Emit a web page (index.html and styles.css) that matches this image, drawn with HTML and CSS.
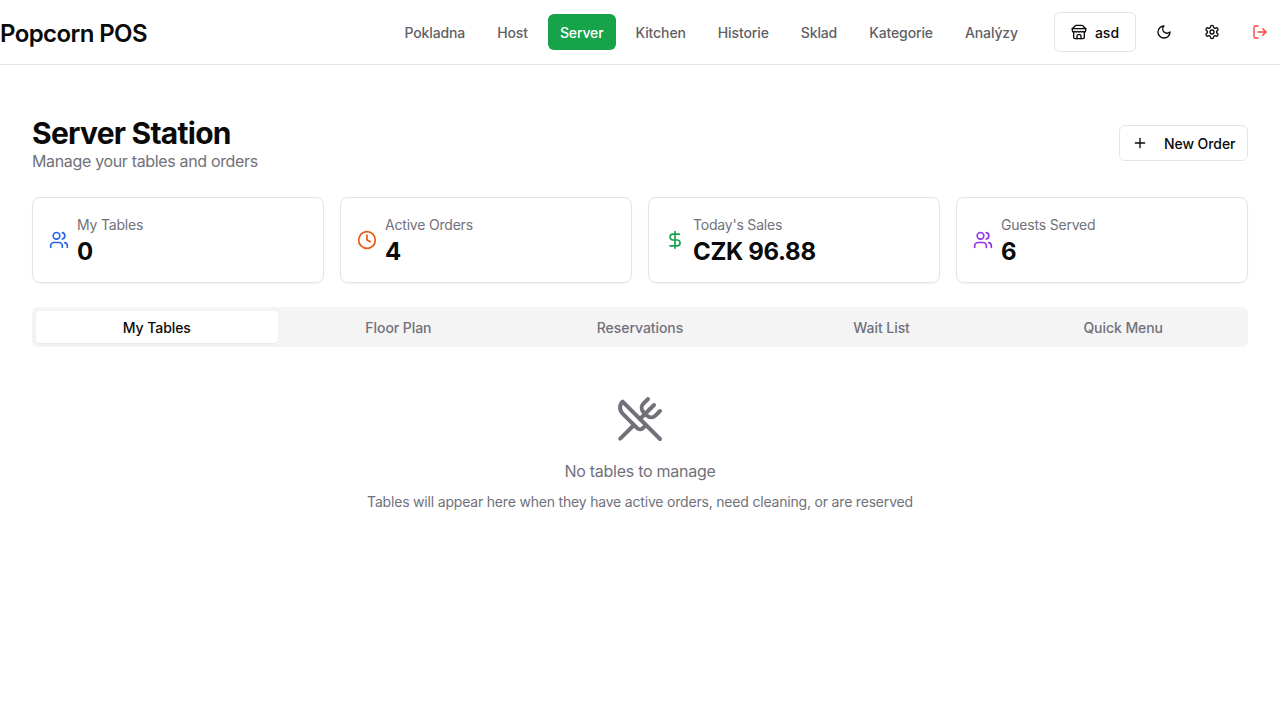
FILE: index.html
```html
<!DOCTYPE html>
<html lang="en">
<head>
    <meta charset="UTF-8">
    <meta name="viewport" content="width=device-width, initial-scale=1.0">
    <title>Popcorn POS - Server Station</title>
    <link rel="stylesheet" href="styles.css">
</head>
<body>

    <!-- Header -->
    <header class="topbar">
        <div class="logo">Popcorn POS</div>
        <div class="topbar-right">
            <nav class="main-nav">
                <a href="#">Pokladna</a>
                <a href="#">Host</a>
                <a href="#" class="active">Server</a>
                <a href="#">Kitchen</a>
                <a href="#">Historie</a>
                <a href="#">Sklad</a>
                <a href="#">Kategorie</a>
                <a href="#">Analýzy</a>
            </nav>
            <div class="topbar-actions">
                <button class="store-btn">
                    <svg class="icon icon-16" viewBox="0 0 24 24"><path d="m2 7 4.41-4.41A2 2 0 0 1 7.83 2h8.34a2 2 0 0 1 1.42.59L22 7"/><path d="M4 12v8a2 2 0 0 0 2 2h12a2 2 0 0 0 2-2v-8"/><path d="M15 22v-4a2 2 0 0 0-2-2h-2a2 2 0 0 0-2 2v4"/><path d="M2 7h20"/><path d="M22 7v3a2 2 0 0 1-2 2a2.7 2.7 0 0 1-1.59-.63.7.7 0 0 0-.82 0A2.7 2.7 0 0 1 16 12a2.7 2.7 0 0 1-1.59-.63.7.7 0 0 0-.82 0A2.7 2.7 0 0 1 12 12a2.7 2.7 0 0 1-1.59-.63.7.7 0 0 0-.82 0A2.7 2.7 0 0 1 8 12a2.7 2.7 0 0 1-1.59-.63.7.7 0 0 0-.82 0A2.7 2.7 0 0 1 4 12a2 2 0 0 1-2-2V7"/></svg>
                    asd
                </button>
                <button class="icon-btn">
                    <svg class="icon icon-16" viewBox="0 0 24 24"><path d="M12 3a6 6 0 0 0 9 9 9 9 0 1 1-9-9Z"/></svg>
                </button>
                <button class="icon-btn">
                    <svg class="icon icon-16" viewBox="0 0 24 24"><path d="M12.22 2h-.44a2 2 0 0 0-2 2v.18a2 2 0 0 1-1 1.73l-.43.25a2 2 0 0 1-2 0l-.15-.08a2 2 0 0 0-2.73.73l-.22.38a2 2 0 0 0 .73 2.73l.15.1a2 2 0 0 1 1 1.72v.51a2 2 0 0 1-1 1.74l-.15.09a2 2 0 0 0-.73 2.73l.22.38a2 2 0 0 0 2.73.73l.15-.08a2 2 0 0 1 2 0l.43.25a2 2 0 0 1 1 1.73V20a2 2 0 0 0 2 2h.44a2 2 0 0 0 2-2v-.18a2 2 0 0 1 1-1.73l.43-.25a2 2 0 0 1 2 0l.15.08a2 2 0 0 0 2.73-.73l.22-.39a2 2 0 0 0-.73-2.73l-.15-.08a2 2 0 0 1-1-1.74v-.5a2 2 0 0 1 1-1.74l.15-.09a2 2 0 0 0 .73-2.73l-.22-.38a2 2 0 0 0-2.73-.73l-.15.08a2 2 0 0 1-2 0l-.43-.25a2 2 0 0 1-1-1.73V4a2 2 0 0 0-2-2z"/><circle cx="12" cy="12" r="3"/></svg>
                </button>
                <button class="icon-btn logout">
                    <svg class="icon icon-16" viewBox="0 0 24 24"><path d="M9 21H5a2 2 0 0 1-2-2V5a2 2 0 0 1 2-2h4"/><polyline points="16 17 21 12 16 7"/><line x1="21" y1="12" x2="9" y2="12"/></svg>
                </button>
            </div>
        </div>
    </header>

    <!-- Main Content -->
    <main class="container">
        <div class="page-head">
            <div>
                <h1>Server Station</h1>
                <p>Manage your tables and orders</p>
            </div>
            <button class="new-order">
                <svg class="icon icon-16" viewBox="0 0 24 24"><path d="M5 12h14"/><path d="M12 5v14"/></svg>
                New Order
            </button>
        </div>

        <!-- Stat cards -->
        <div class="stats">
            <div class="stat-card">
                <svg class="icon icon-20 blue" viewBox="0 0 24 24"><path d="M16 21v-2a4 4 0 0 0-4-4H6a4 4 0 0 0-4 4v2"/><circle cx="9" cy="7" r="4"/><path d="M22 21v-2a4 4 0 0 0-3-3.87"/><path d="M16 3.13a4 4 0 0 1 0 7.75"/></svg>
                <div class="stat-text">
                    <div class="stat-label">My Tables</div>
                    <div class="stat-value">0</div>
                </div>
            </div>
            <div class="stat-card">
                <svg class="icon icon-20 orange" viewBox="0 0 24 24"><circle cx="12" cy="12" r="10"/><polyline points="12 6 12 12 16 14"/></svg>
                <div class="stat-text">
                    <div class="stat-label">Active Orders</div>
                    <div class="stat-value">4</div>
                </div>
            </div>
            <div class="stat-card">
                <svg class="icon icon-20 green" viewBox="0 0 24 24"><line x1="12" y1="2" x2="12" y2="22"/><path d="M17 5H9.5a3.5 3.5 0 0 0 0 7h5a3.5 3.5 0 0 1 0 7H6"/></svg>
                <div class="stat-text">
                    <div class="stat-label">Today's Sales</div>
                    <div class="stat-value">CZK 96.88</div>
                </div>
            </div>
            <div class="stat-card">
                <svg class="icon icon-20 purple" viewBox="0 0 24 24"><path d="M16 21v-2a4 4 0 0 0-4-4H6a4 4 0 0 0-4 4v2"/><circle cx="9" cy="7" r="4"/><path d="M22 21v-2a4 4 0 0 0-3-3.87"/><path d="M16 3.13a4 4 0 0 1 0 7.75"/></svg>
                <div class="stat-text">
                    <div class="stat-label">Guests Served</div>
                    <div class="stat-value">6</div>
                </div>
            </div>
        </div>

        <!-- Tabs -->
        <div class="tabs">
            <button class="tab active">My Tables</button>
            <button class="tab">Floor Plan</button>
            <button class="tab">Reservations</button>
            <button class="tab">Wait List</button>
            <button class="tab">Quick Menu</button>
        </div>

        <!-- Empty state -->
        <div class="empty">
            <svg class="icon icon-48" viewBox="0 0 24 24"><path d="m16 2-2.3 2.3a3 3 0 0 0 0 4.2l1.8 1.8a3 3 0 0 0 4.2 0L22 8"/><path d="M15 15 3.3 3.3a4.2 4.2 0 0 0 0 6l7.3 7.3c.7.7 2 .7 2.8 0L15 15Zm0 0 7 7"/><path d="m2.1 21.8 6.4-6.3"/><path d="m19 5-7 7"/></svg>
            <div class="empty-title">No tables to manage</div>
            <div class="empty-text">Tables will appear here when they have active orders, need cleaning, or are reserved</div>
        </div>
    </main>

</body>
</html>
```

FILE: styles.css
```css
/* General */
* {
    box-sizing: border-box;
}

body {
    font-family: 'Inter', sans-serif;
    margin: 0;
    padding: 0;
    background-color: #fff;
    color: #0a0a0a;
}

button {
    font-family: inherit;
    color: inherit;
    background: none;
    border: none;
    padding: 0;
}

.icon {
    fill: none;
    stroke: currentColor;
    stroke-width: 2;
    stroke-linecap: round;
    stroke-linejoin: round;
    flex-shrink: 0;
    display: block;
}

.icon-16 {
    width: 16px;
    height: 16px;
}

.icon-20 {
    width: 20px;
    height: 20px;
}

.icon-48 {
    width: 48px;
    height: 48px;
}

/* Header */
.topbar {
    height: 65px;
    border-bottom: 1px solid #e4e4e7;
    display: flex;
    align-items: center;
    justify-content: space-between;
}

.logo {
    padding-top: 3px;
    font-size: 24px;
    font-weight: 600;
    line-height: 32px;
    letter-spacing: -0.6px;
}

.topbar-right {
    display: flex;
    align-items: center;
    gap: 24px;
}

.main-nav {
    display: flex;
    gap: 8px;
}

.main-nav a {
    height: 36px;
    padding: 0 12px;
    display: flex;
    align-items: center;
    border-radius: 6px;
    color: #5f5f66;
    font-size: 14px;
    font-weight: 450;
    letter-spacing: -0.12px;
    text-decoration: none;
}

.main-nav a.active {
    background-color: #16a34a;
    color: #fff;
}

.topbar-actions {
    display: flex;
    align-items: center;
    gap: 8px;
}

.store-btn {
    width: 82px;
    height: 40px;
    border: 1px solid #e4e4e7;
    border-radius: 6px;
    display: flex;
    align-items: center;
    justify-content: center;
    gap: 8px;
    font-size: 14px;
    font-weight: 450;
}

.icon-btn {
    width: 40px;
    height: 40px;
    display: flex;
    align-items: center;
    justify-content: center;
    border-radius: 6px;
}

.logout {
    color: #ef4444;
}

/* Page */
.container {
    padding: 48px 32px 32px;
}

.page-head {
    display: flex;
    align-items: center;
    justify-content: space-between;
    margin-bottom: 24px;
}

.page-head h1 {
    margin: 2px 0 -2px;
    font-size: 30px;
    font-weight: 700;
    line-height: 36px;
    letter-spacing: -0.75px;
}

.page-head p {
    margin: 0;
    font-size: 16px;
    line-height: 24px;
    letter-spacing: -0.34px;
    color: #71717a;
}

.new-order {
    width: 129px;
    height: 36px;
    padding: 0 12px;
    border: 1px solid #e4e4e7;
    border-radius: 6px;
    display: flex;
    align-items: center;
    gap: 16px;
    font-size: 14px;
    font-weight: 450;
    letter-spacing: -0.08px;
    white-space: nowrap;
}

/* Stat cards */
.stats {
    display: grid;
    grid-template-columns: repeat(4, 1fr);
    gap: 16px;
    margin-bottom: 24px;
}

.stat-card {
    height: 86px;
    padding: 0 16px;
    border: 1px solid #e4e4e7;
    border-radius: 8px;
    box-shadow: 0 1px 2px rgba(0, 0, 0, 0.05);
    display: flex;
    align-items: center;
    gap: 8px;
}

.stat-text {
    padding-top: 3px;
}

.stat-label {
    font-size: 14px;
    line-height: 20px;
    letter-spacing: -0.2px;
    color: #71717a;
}

.stat-value {
    margin-top: 1px;
    font-size: 24px;
    font-weight: 700;
    line-height: 32px;
    letter-spacing: -0.33px;
}

.blue {
    color: #2563eb;
}

.orange {
    color: #ea580c;
}

.green {
    color: #16a34a;
}

.purple {
    color: #9333ea;
}

/* Tabs */
.tabs {
    height: 40px;
    padding: 4px;
    background-color: #f4f4f5;
    border-radius: 6px;
    display: grid;
    grid-template-columns: repeat(5, 1fr);
}

.tab {
    border-radius: 4px;
    font-size: 14px;
    font-weight: 450;
    letter-spacing: -0.06px;
    color: #71717a;
}

.tab.active {
    background-color: #fff;
    color: #0a0a0a;
    box-shadow: 0 1px 2px rgba(0, 0, 0, 0.05);
}

/* Empty state */
.empty {
    padding-top: 48px;
    display: flex;
    flex-direction: column;
    align-items: center;
    color: #71717a;
}

.empty-title {
    margin-top: 16px;
    font-size: 16px;
    line-height: 24px;
    letter-spacing: -0.26px;
}

.empty-text {
    margin-top: 9px;
    font-size: 14px;
    line-height: 20px;
    letter-spacing: -0.19px;
}
```
